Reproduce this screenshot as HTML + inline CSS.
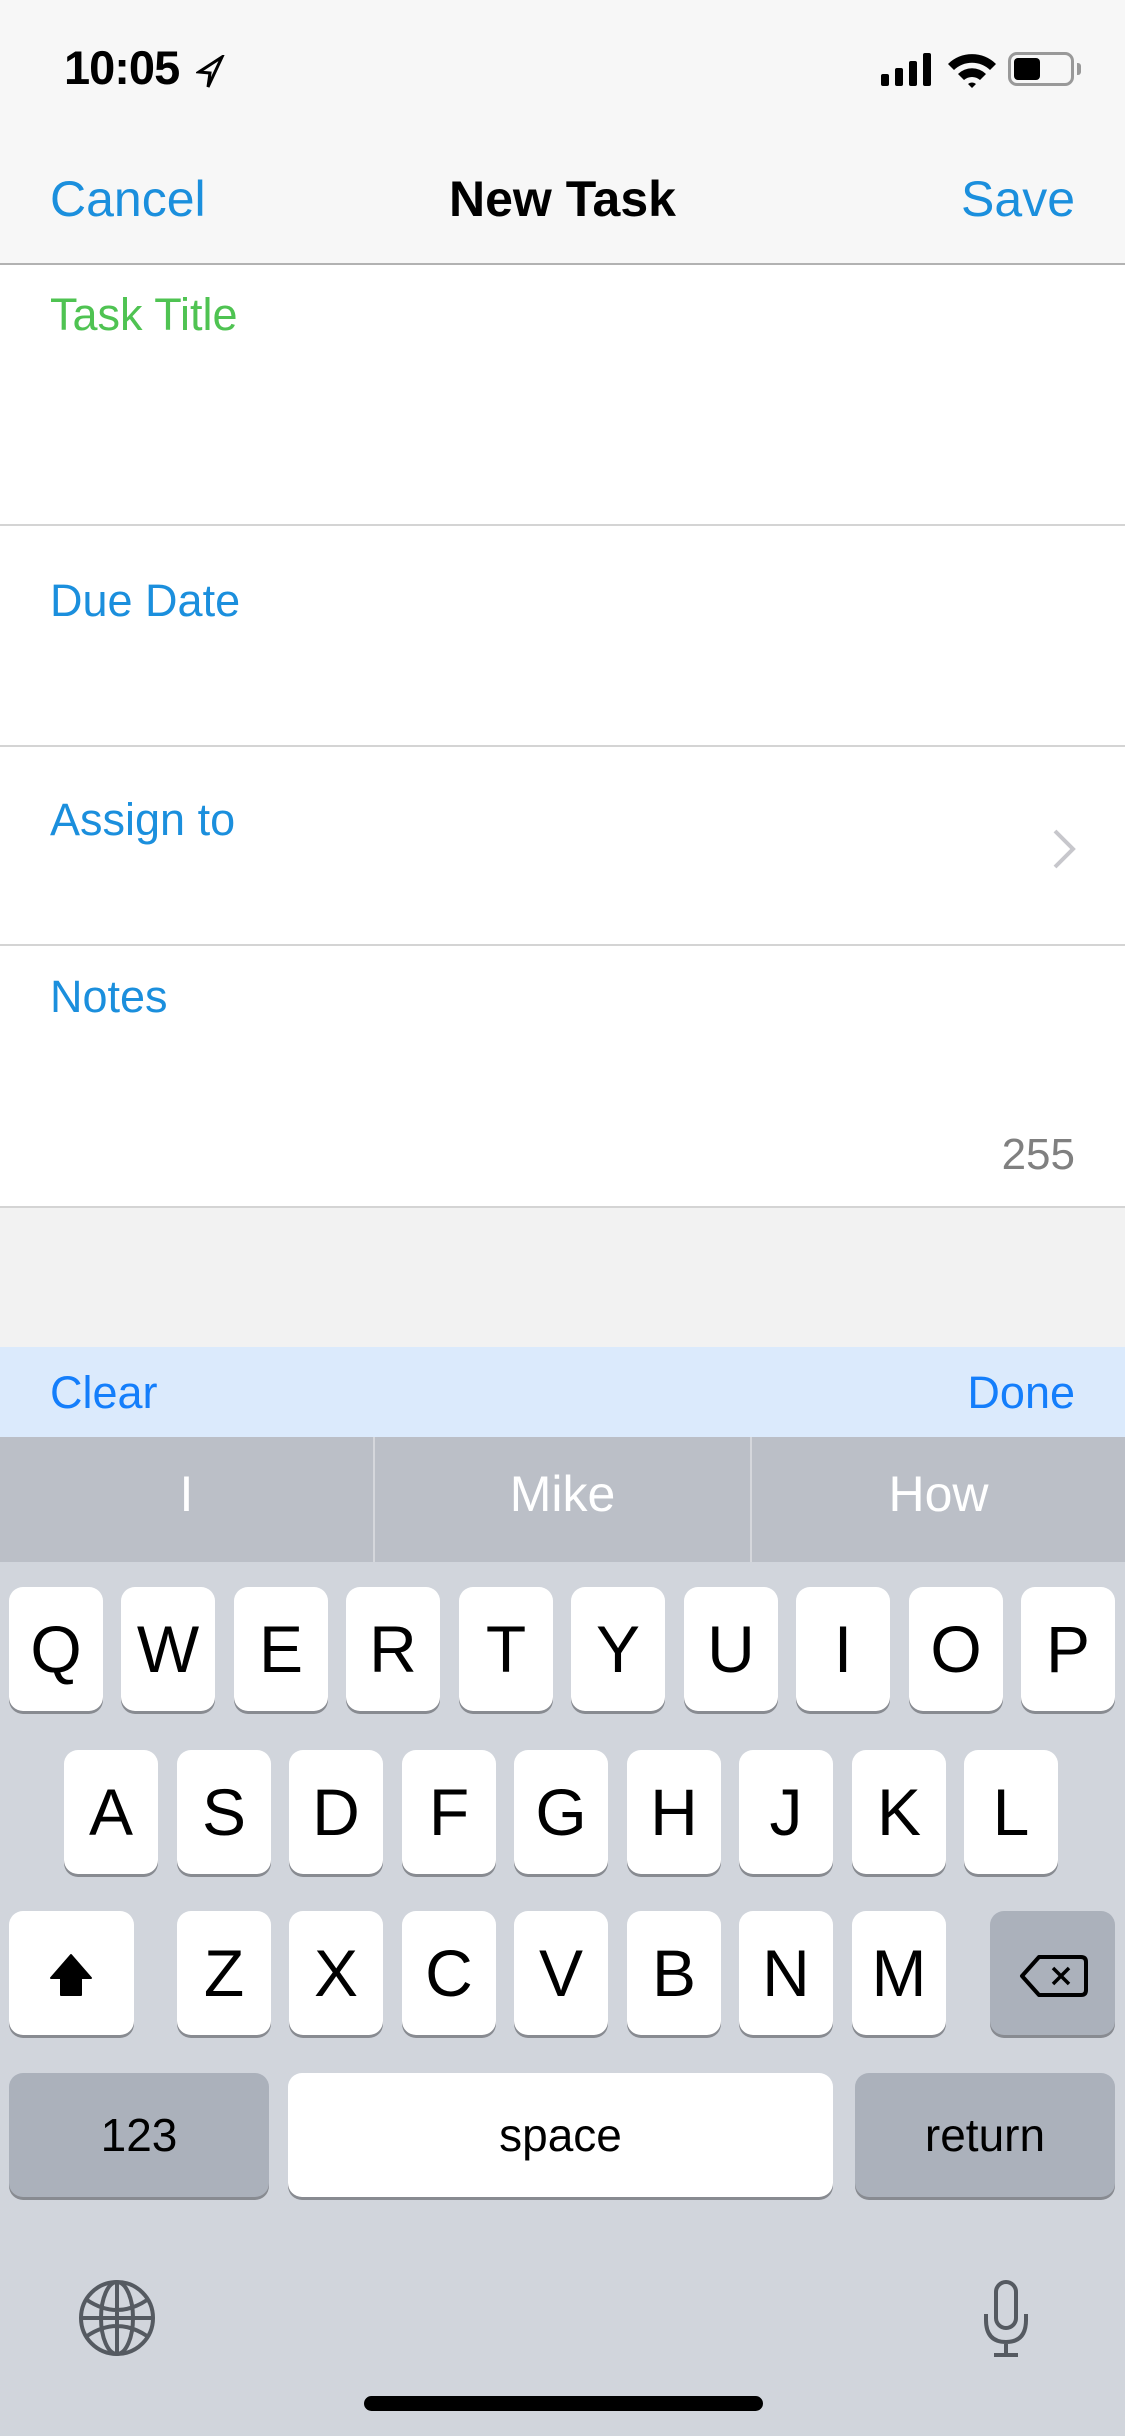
<!DOCTYPE html>
<html><head><meta charset="utf-8">
<style>
*{margin:0;padding:0;box-sizing:border-box}
body{width:1125px;height:2436px;position:relative;overflow:hidden;background:#fff;font-family:"Liberation Sans",Arial,sans-serif}
.a{position:absolute}
.nav{left:0;top:0;width:1125px;height:265px;background:#f7f7f7;border-bottom:2px solid #b2b2b2}
.lbl{left:50px;font-size:45px;color:#1b8fdd;line-height:50px}
.sep{left:0;width:1125px;height:2px;background:#d4d4d4}
.key{position:absolute;width:94px;height:124px;background:#fff;border-radius:14px;box-shadow:0 3px 0 #888b91;font-size:66px;text-align:center;line-height:124px;color:#000}
.dk{background:#abb1bb}
</style></head><body>
<div class="a nav"></div>
<div class="a" style="left:64px;top:40px;font-size:47px;font-weight:bold;letter-spacing:-1px;line-height:56px">10:05</div>
<svg class="a" style="left:196px;top:55px" width="30" height="34" viewBox="0 0 30 34"><path d="M26 2 L3 17 L14 18 L12 32 Z" fill="none" stroke="#000" stroke-width="3" stroke-linejoin="miter"/></svg>
<svg class="a" style="left:880px;top:52px" width="56" height="34"><rect x="1" y="22" width="8" height="12" rx="2"/><rect x="15" y="16" width="8" height="18" rx="2"/><rect x="29" y="9" width="8" height="25" rx="2"/><rect x="43" y="1" width="8" height="33" rx="2"/></svg>
<svg class="a" style="left:946px;top:50px" width="52" height="38" viewBox="0 0 52 38"><path d="M2 14 A34 34 0 0 1 50 14 L44 20 A26 26 0 0 0 8 20Z M12 24 A20 20 0 0 1 40 24 L34 30 A12 12 0 0 0 18 30Z M22 34 L26 38 L30 34 A6 6 0 0 0 22 34Z"/></svg>
<div class="a" style="left:1008px;top:52px;width:66px;height:34px;border:3px solid #999;border-radius:9px"></div>
<div class="a" style="left:1014px;top:58px;width:26px;height:22px;background:#000;border-radius:4px"></div>
<div class="a" style="left:1077px;top:63px;width:4px;height:12px;background:#999;border-radius:0 3px 3px 0"></div>
<div class="a" style="left:50px;top:170px;font-size:50px;color:#1b8fdd">Cancel</div>
<div class="a" style="left:0;width:1125px;text-align:center;top:170px;font-size:50px;font-weight:bold;color:#000">New Task</div>
<div class="a" style="right:50px;top:170px;font-size:50px;color:#1b8fdd">Save</div>

<div class="a lbl" style="top:290px;color:#4fc352">Task Title</div>
<div class="a sep" style="top:524px"></div>
<div class="a lbl" style="top:576px">Due Date</div>
<div class="a sep" style="top:745px"></div>
<div class="a lbl" style="top:795px">Assign to</div>
<svg class="a" style="left:1052px;top:828px" width="26" height="42"><path d="M3 3 L21 21 L3 39" fill="none" stroke="#c7c7cc" stroke-width="4"/></svg>
<div class="a sep" style="top:944px"></div>
<div class="a lbl" style="top:972px">Notes</div>
<div class="a" style="right:50px;top:1130px;font-size:44px;color:#808080">255</div>
<div class="a" style="left:0;top:1206px;width:1125px;height:141px;background:#f2f2f2;border-top:2px solid #d4d4d4"></div>

<div class="a" style="left:0;top:1347px;width:1125px;height:90px;background:#dbeafc"></div>
<div class="a" style="left:50px;top:1367px;font-size:45px;color:#147efb">Clear</div>
<div class="a" style="right:50px;top:1367px;font-size:45px;color:#147efb">Done</div>

<div class="a" style="left:0;top:1437px;width:1125px;height:999px;background:#d1d5dc"></div>
<div class="a" style="left:0;top:1437px;width:1125px;height:125px;background:#bbbfc7"></div>
<div class="a" style="left:373px;top:1437px;width:2px;height:125px;background:#d5d7dc"></div>
<div class="a" style="left:750px;top:1437px;width:2px;height:125px;background:#d5d7dc"></div>
<div class="a" style="left:0;width:373px;top:1465px;text-align:center;font-size:50px;color:#fff">I</div>
<div class="a" style="left:375px;width:375px;top:1465px;text-align:center;font-size:50px;color:#fff">Mike</div>
<div class="a" style="left:752px;width:373px;top:1465px;text-align:center;font-size:50px;color:#fff">How</div>

<div class="key" style="left:9px;top:1587px">Q</div>
<div class="key" style="left:121px;top:1587px">W</div>
<div class="key" style="left:234px;top:1587px">E</div>
<div class="key" style="left:346px;top:1587px">R</div>
<div class="key" style="left:459px;top:1587px">T</div>
<div class="key" style="left:571px;top:1587px">Y</div>
<div class="key" style="left:684px;top:1587px">U</div>
<div class="key" style="left:796px;top:1587px">I</div>
<div class="key" style="left:909px;top:1587px">O</div>
<div class="key" style="left:1021px;top:1587px">P</div>

<div class="key" style="left:64px;top:1750px">A</div>
<div class="key" style="left:177px;top:1750px">S</div>
<div class="key" style="left:289px;top:1750px">D</div>
<div class="key" style="left:402px;top:1750px">F</div>
<div class="key" style="left:514px;top:1750px">G</div>
<div class="key" style="left:627px;top:1750px">H</div>
<div class="key" style="left:739px;top:1750px">J</div>
<div class="key" style="left:852px;top:1750px">K</div>
<div class="key" style="left:964px;top:1750px">L</div>

<div class="key" style="left:9px;top:1911px;width:125px"><svg style="position:absolute;left:40px;top:42px" width="44" height="44" viewBox="0 0 44 44"><path d="M22 2 L42 25 L32 25 L32 42 L12 42 L12 25 L2 25 Z" fill="#000" stroke="#000" stroke-width="2" stroke-linejoin="round"/></svg></div>
<div class="key" style="left:177px;top:1911px">Z</div>
<div class="key" style="left:289px;top:1911px">X</div>
<div class="key" style="left:402px;top:1911px">C</div>
<div class="key" style="left:514px;top:1911px">V</div>
<div class="key" style="left:627px;top:1911px">B</div>
<div class="key" style="left:739px;top:1911px">N</div>
<div class="key" style="left:852px;top:1911px">M</div>
<div class="key dk" style="left:990px;top:1911px;width:125px"><svg style="position:absolute;left:29px;top:43px" width="70" height="44" viewBox="0 0 70 44"><path d="M20 3 L62 3 Q67 3 67 8 L67 36 Q67 41 62 41 L20 41 L3 22 Z" fill="none" stroke="#000" stroke-width="4" stroke-linejoin="round"/><path d="M34 14 L50 30 M50 14 L34 30" stroke="#000" stroke-width="3.5"/></svg></div>

<div class="key dk" style="left:9px;top:2073px;width:260px;font-size:46px">123</div>
<div class="key" style="left:288px;top:2073px;width:545px;font-size:46px">space</div>
<div class="key dk" style="left:855px;top:2073px;width:260px;font-size:46px">return</div>

<svg class="a" style="left:77px;top:2278px" width="80" height="80" viewBox="0 0 80 80"><g fill="none" stroke="#555a61" stroke-width="4"><circle cx="40" cy="40" r="36"/><ellipse cx="40" cy="40" rx="16" ry="36"/><path d="M40 4 V76 M4 40 H76 M10 22 Q40 42 70 22 M10 58 Q40 38 70 58"/></g></svg>
<svg class="a" style="left:983px;top:2280px" width="46" height="78" viewBox="0 0 46 78"><g fill="none" stroke="#555a61" stroke-width="4"><rect x="13" y="2" width="20" height="46" rx="10"/><path d="M3 34 V40 Q3 62 23 62 Q43 62 43 40 V34 M23 62 V74 M11 75 H35"/></g></svg>
<div class="a" style="left:364px;top:2396px;width:399px;height:15px;background:#000;border-radius:8px"></div>
</body></html>
